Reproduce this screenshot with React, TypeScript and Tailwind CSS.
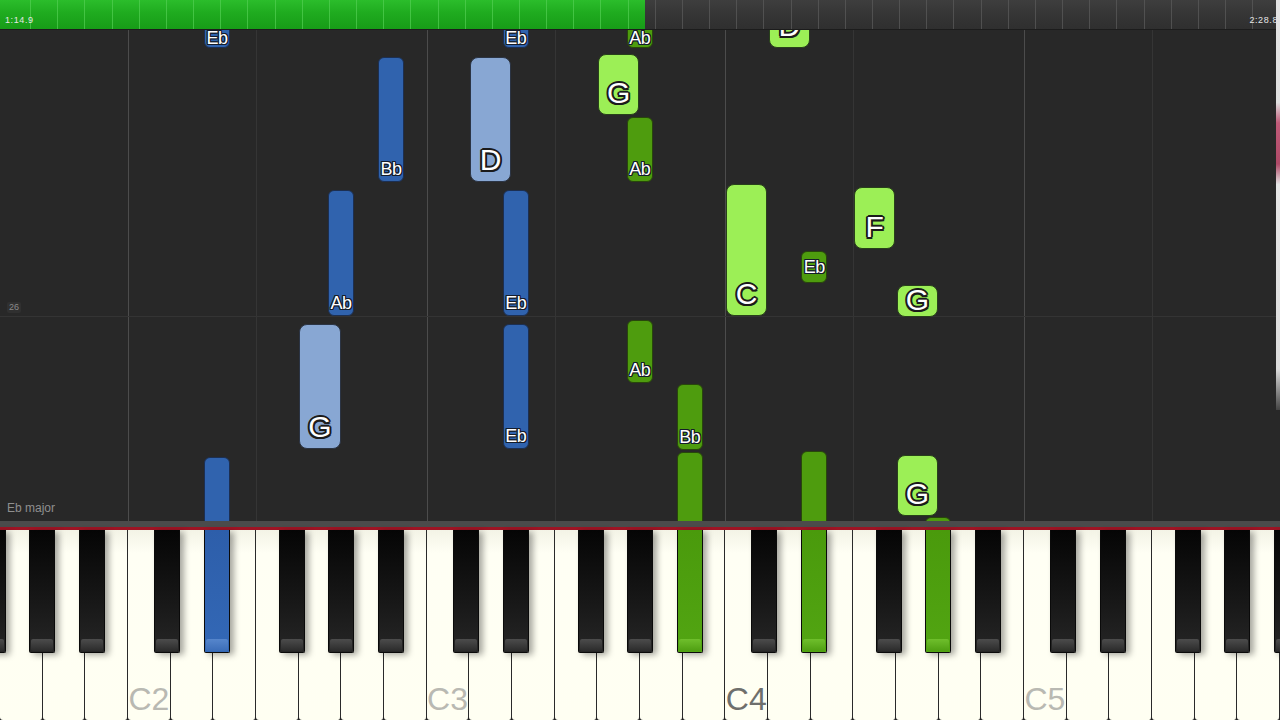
const W = 1280 / 30;
const WHITE_NAMES = ["C", "D", "E", "F", "G", "A", "B"];
const BLACK_OFF: Record<string, number> = { "C#": 26, "D#": 76, "F#": 151, "G#": 200, "A#": 250 };
const octX = (o: number) => 128 + (o - 2) * W * 7;

function keyPos(name: string, o: number) {
  if (name in BLACK_OFF) return { x: octX(o) + BLACK_OFF[name], w: 26 };
  return { x: octX(o) + WHITE_NAMES.indexOf(name) * W + 0.5, w: W - 1 };
}

type Kind = "lb" | "db" | "lg" | "dg";

const NOTE_STYLE: Record<Kind, string> = {
  lb: "bg-[#88a7d3] border-[#2b3444] rounded-[8px]",
  db: "bg-[#3063ae] border-[#1c2f52] rounded-[6px]",
  lg: "bg-[#9cef56] border-[#28411a] rounded-[8px]",
  dg: "bg-[#4e9c0e] border-[#28470b] rounded-[6px]",
};

// y values are relative to the top of the roll (page y - 30)
const notes: { k: string; o: number; kind: Kind; top: number; bottom: number; label?: string; pb?: number; lh?: number }[] = [
  { k: "D#", o: 2, kind: "db", top: -40, bottom: 18, label: "Eb", pb: 1, lh: 15 },
  { k: "A#", o: 2, kind: "db", top: 27, bottom: 152, label: "Bb" },
  { k: "D", o: 3, kind: "lb", top: 27, bottom: 152, label: "D" },
  { k: "D#", o: 3, kind: "db", top: -40, bottom: 18, label: "Eb", pb: 1, lh: 15 },
  { k: "G#", o: 2, kind: "db", top: 160, bottom: 286, label: "Ab" },
  { k: "D#", o: 3, kind: "db", top: 160, bottom: 286, label: "Eb" },
  { k: "G", o: 2, kind: "lb", top: 294, bottom: 419, label: "G" },
  { k: "D#", o: 3, kind: "db", top: 294, bottom: 419, label: "Eb" },
  { k: "D#", o: 2, kind: "db", top: 427, bottom: 520 },
  { k: "D", o: 4, kind: "lg", top: -40, bottom: 18, label: "D" },
  { k: "G#", o: 3, kind: "dg", top: -40, bottom: 18, label: "Ab", pb: 1, lh: 15 },
  { k: "G", o: 3, kind: "lg", top: 24, bottom: 85, label: "G" },
  { k: "G#", o: 3, kind: "dg", top: 87, bottom: 152, label: "Ab" },
  { k: "C", o: 4, kind: "lg", top: 154, bottom: 286, label: "C" },
  { k: "F", o: 4, kind: "lg", top: 157, bottom: 219, label: "F" },
  { k: "D#", o: 4, kind: "dg", top: 221, bottom: 253, label: "Eb", pb: 6 },
  { k: "G", o: 4, kind: "lg", top: 255, bottom: 287, label: "G", pb: 1 },
  { k: "G#", o: 3, kind: "dg", top: 290, bottom: 353, label: "Ab" },
  { k: "A#", o: 3, kind: "dg", top: 354, bottom: 420, label: "Bb" },
  { k: "A#", o: 3, kind: "dg", top: 422, bottom: 520 },
  { k: "D#", o: 4, kind: "dg", top: 421, bottom: 520 },
  { k: "G", o: 4, kind: "lg", top: 425, bottom: 486, label: "G" },
  { k: "G#", o: 4, kind: "dg", top: 487, bottom: 520 },
];

const LIT: Record<string, string> = { "D#2": "blue", "A#3": "green", "D#4": "green", "G#4": "green" };

const outlineBig =
  "[text-shadow:2px_0_0_#1b1b1b,-2px_0_0_#1b1b1b,0_2px_0_#1b1b1b,0_-2px_0_#1b1b1b,1.5px_1.5px_0_#1b1b1b,-1.5px_-1.5px_0_#1b1b1b,1.5px_-1.5px_0_#1b1b1b,-1.5px_1.5px_0_#1b1b1b]";
const outlineSmall =
  "[text-shadow:1px_0_0_#141c2a,-1px_0_0_#141c2a,0_1px_0_#141c2a,0_-1px_0_#141c2a,1px_1px_0_#141c2a,-1px_-1px_0_#141c2a,1px_-1px_0_#141c2a,-1px_1px_0_#141c2a]";

function Note({ n }: { n: (typeof notes)[number] }) {
  const p = keyPos(n.k, n.o);
  const big = !n.k.includes("#");
  return (
    <div
      className={`absolute flex flex-col items-center justify-end overflow-visible border-[1.5px] ${NOTE_STYLE[n.kind]}`}
      style={{ left: p.x, width: p.w, top: n.top, height: n.bottom - n.top, paddingBottom: n.pb ?? (big ? 6 : 3) }}
    >
      {n.label && (
        <span
          className={
            big
              ? `text-[30px] leading-[30px] text-white ${outlineBig}`
              : `text-[18px] tracking-[-0.5px] text-white ${outlineSmall}`
          }
          style={big ? undefined : { lineHeight: `${n.lh ?? 18}px` }}
        >
          {n.label}
        </span>
      )}
    </div>
  );
}

const COLS = [128, 128, 170.67, 128, 170.67, 128, 170.67, 128, 128];
const COL_LINE = ["", "border-l border-[#4c4c4c]", "border-l border-[#353535]", "border-l border-[#4c4c4c]", "border-l border-[#353535]", "border-l border-[#4c4c4c]", "border-l border-[#353535]", "border-l border-[#4c4c4c]", "border-l border-[#353535]"];

const whites = Array.from({ length: 30 }, (_, i) => {
  const name = WHITE_NAMES[(i + 4) % 7];
  const o = 1 + Math.floor((i + 4) / 7);
  return { name, o, i };
});

const blacks: { name: string; o: number; x: number }[] = [];
for (let o = 1; o <= 5; o++) {
  for (const name of Object.keys(BLACK_OFF)) {
    const x = octX(o) + BLACK_OFF[name];
    if (x + 26 > 0 && x < 1280) blacks.push({ name, o, x });
  }
}

export default function App() {
  return (
    <div className="relative flex h-[720px] w-[1280px] flex-col overflow-hidden bg-[#282828] font-['Liberation_Sans',Arial,sans-serif]">
      {/* progress bar */}
      <div className="relative flex h-[30px] border-b border-[#1c1c1c]">
        <div className="w-[645px] bg-[linear-gradient(to_bottom,#2bbd2b,#1fab1f_45%,#179c17)]" />
        <div className="flex-1 bg-[linear-gradient(to_bottom,#3e3e3e,#363636_45%,#2f2f2f)]" />
        <div className="absolute inset-0 flex pl-[4px]">
          {Array.from({ length: 47 }).map((_, i) => (
            <div key={i} className={`flex-1 border-r ${i < 23 ? "border-[#52cf52]/70" : "border-[#575757]/80"}`} />
          ))}
        </div>
        <div className="absolute inset-0 flex items-end justify-between pb-[2px] pl-[5px] pr-[2px] text-[9px] tracking-[0.6px] text-[#e6e6e6]">
          <span>1:14.9</span>
          <span>2:28.8</span>
        </div>
      </div>

      {/* falling notes */}
      <div className="relative h-[491px] overflow-hidden">
        <div className="flex h-full">
          {COLS.map((w, i) => (
            <div key={i} className={`h-full ${COL_LINE[i]}`} style={{ width: w }} />
          ))}
        </div>
        <div className="absolute inset-x-0 top-[286px] border-t border-[#343434]" />
        <span className="absolute left-[7px] top-[272px] rounded-[2px] bg-[#303030] px-[2px] text-[9px] leading-[11px] text-[#8a8a8a]">26</span>
        <span className="absolute bottom-[4px] left-[7px] text-[12px] text-[#8f8f8f]">Eb major</span>
        {notes.map((n, i) => (
          <Note key={i} n={n} />
        ))}
      </div>

      <div className="h-[6px] bg-[#4b4b4b]" />
      <div className="h-[3px] bg-[#9e1424]" />

      {/* keyboard */}
      <div className="relative flex h-[190px] bg-[#222]">
        {whites.map((k) => (
          <div
            key={k.i}
            className="flex flex-1 items-end justify-center rounded-b-[3px] border-r-[1.5px] border-[#2a2a2a] bg-[linear-gradient(to_bottom,#f3f3e6,#fffff4_12%,#fffff2)] pb-[5px]"
          >
            {k.name === "C" && k.o >= 2 && (
              <span className={`text-[32px] leading-[32px] ${k.o === 4 ? "text-[#6f6f6c]" : "text-[#b9b9b2]"}`}>
                C{k.o}
              </span>
            )}
          </div>
        ))}
        {blacks.map((b) => {
          const lit = LIT[`${b.name}${b.o}`];
          const body =
            lit === "blue"
              ? "bg-[linear-gradient(to_bottom,#2d5eaa,#3368b6)]"
              : lit === "green"
                ? "bg-[linear-gradient(to_bottom,#4a9a0c,#52a512)]"
                : "bg-[linear-gradient(to_bottom,#050505,#181818_60%,#262626)]";
          const lip =
            lit === "blue"
              ? "bg-[linear-gradient(to_bottom,#5686cc,#3b6db8)]"
              : lit === "green"
                ? "bg-[linear-gradient(to_bottom,#6fbf2c,#4f9f12)]"
                : "bg-[linear-gradient(to_bottom,#4c4c4c,#2b2b2b)]";
          return (
            <div
              key={`${b.name}${b.o}`}
              className={`absolute top-0 flex h-[123px] w-[26px] flex-col justify-end rounded-b-[2px] border-[1.5px] border-t-0 border-[#0a0a0a] shadow-[4px_2px_6px_rgba(0,0,0,0.35)] ${body}`}
              style={{ left: b.x }}
            >
              <div className={`mx-[1px] mb-[1px] h-[12px] rounded-[2px] ${lip}`} />
            </div>
          );
        })}
      </div>

      {/* video edge strip */}
      <div className="absolute right-0 top-0 h-[410px] w-[4px] bg-[linear-gradient(to_bottom,#e4e4e4,#e0e0e0_25%,#c05a78_30%,#b04a68_40%,#e6e6e6_45%,#dcdcdc_90%,#444)]" />
    </div>
  );
}
